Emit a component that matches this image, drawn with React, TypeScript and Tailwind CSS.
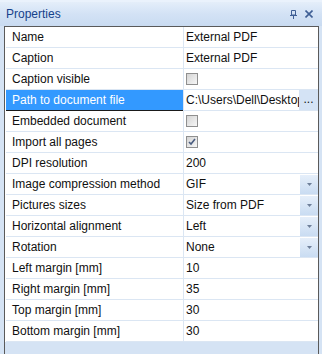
import React from 'react';

type Kind = 'text' | 'check' | 'combo' | 'path';

interface Row {
  label: string;
  value?: string;
  kind: Kind;
  checked?: boolean;
  selected?: boolean;
}

const rows: Row[] = [
  { label: 'Name', value: 'External PDF', kind: 'text' },
  { label: 'Caption', value: 'External PDF', kind: 'text' },
  { label: 'Caption visible', kind: 'check' },
  { label: 'Path to document file', value: 'C:\\Users\\Dell\\Desktop', kind: 'path', selected: true },
  { label: 'Embedded document', kind: 'check' },
  { label: 'Import all pages', kind: 'check', checked: true },
  { label: 'DPI resolution', value: '200', kind: 'text' },
  { label: 'Image compression method', value: 'GIF', kind: 'combo' },
  { label: 'Pictures sizes', value: 'Size from PDF', kind: 'combo' },
  { label: 'Horizontal alignment', value: 'Left', kind: 'combo' },
  { label: 'Rotation', value: 'None', kind: 'combo' },
  { label: 'Left margin [mm]', value: '10', kind: 'text' },
  { label: 'Right margin [mm]', value: '35', kind: 'text' },
  { label: 'Top margin [mm]', value: '30', kind: 'text' },
  { label: 'Bottom margin [mm]', value: '30', kind: 'text' },
];

const CheckBox = ({ checked }: { checked?: boolean }) => (
  <div className="w-[12px] h-[12px] border border-[#8f8f8f] bg-gradient-to-br from-[#d4d4d4] to-[#f7f7f7] flex items-center justify-center">
    {checked && (
      <svg width="8" height="8" viewBox="0 0 8 8">
        <path d="M1 4 L3 6 L7 1" stroke="#4a5d80" strokeWidth="1.6" fill="none" />
      </svg>
    )}
  </div>
);

const DropButton = () => (
  <div className="w-[18px] h-[19px] bg-gradient-to-b from-[#e6effa] to-[#c9dcf2] flex items-center justify-center shrink-0">
    <svg width="5" height="3" viewBox="0 0 5 3">
      <path d="M0 0 H5 L2.5 3 Z" fill="#6e7f99" />
    </svg>
  </div>
);

export default function App() {
  return (
    <div className="w-[322px] h-[354px] bg-[#d5e3f4] flex flex-col overflow-hidden font-['Liberation_Sans',Arial,sans-serif] text-[12px]">
      <div className="h-[26px] shrink-0 flex items-center px-[6px] bg-gradient-to-b from-[#e4eefa] via-[#d3e2f5] to-[#c9dbf1] border-t-2 border-[#eaf2fc]">
        <span className="text-[#15428b] text-[12px]">Properties</span>
        <div className="ml-auto flex items-center gap-[8px] pr-[3px]">
          <svg width="7" height="9" viewBox="0 0 7 9">
            <path d="M1.5 0.5 H5.5 V5 H1.5 Z M0 5.5 H7 M3.5 5.5 V9" stroke="#3f5f95" strokeWidth="1" fill="none" />
          </svg>
          <svg width="8" height="8" viewBox="0 0 8 8">
            <path d="M0.5 0.5 L7.5 7.5 M7.5 0.5 L0.5 7.5" stroke="#3f5f95" strokeWidth="1.6" />
          </svg>
        </div>
      </div>
      <div className="ml-[4px] w-[315px] flex-1 border-l border-t border-r border-[#5a5a5a] flex flex-col">
        {rows.map((row) => (
          <div key={row.label} className="h-[21px] flex bg-white">
            <div className="w-[1px] shrink-0 bg-white" />
            <div
              className={
                row.selected
                  ? 'w-[177px] shrink-0 pl-[6px] flex items-center bg-[#3399ff] text-white border-b border-[#1a1a1a]'
                  : 'w-[177px] shrink-0 pl-[6px] flex items-center text-[#101010] border-b border-[#dbe6f3]'
              }
            >
              <span className="whitespace-nowrap">{row.label}</span>
            </div>
            <div className="w-[1px] shrink-0 bg-[#dbe6f3]" />
            <div className="flex-1 min-w-0 flex items-center border-b border-[#dbe6f3] pl-[2px] text-[#101010]">
              {row.kind === 'check' && <CheckBox checked={row.checked} />}
              {(row.kind === 'text' || row.kind === 'combo') && (
                <span className="flex-1 whitespace-nowrap">{row.value}</span>
              )}
              {row.kind === 'combo' && <DropButton />}
              {row.kind === 'path' && (
                <>
                  <span className="flex-1 min-w-0 overflow-hidden whitespace-nowrap">{row.value}</span>
                  <div className="w-[19px] h-[20px] shrink-0 bg-[#d4e3f5] flex items-center justify-center pb-[2px]">
                    ...
                  </div>
                </>
              )}
            </div>
          </div>
        ))}
      </div>
    </div>
  );
}
